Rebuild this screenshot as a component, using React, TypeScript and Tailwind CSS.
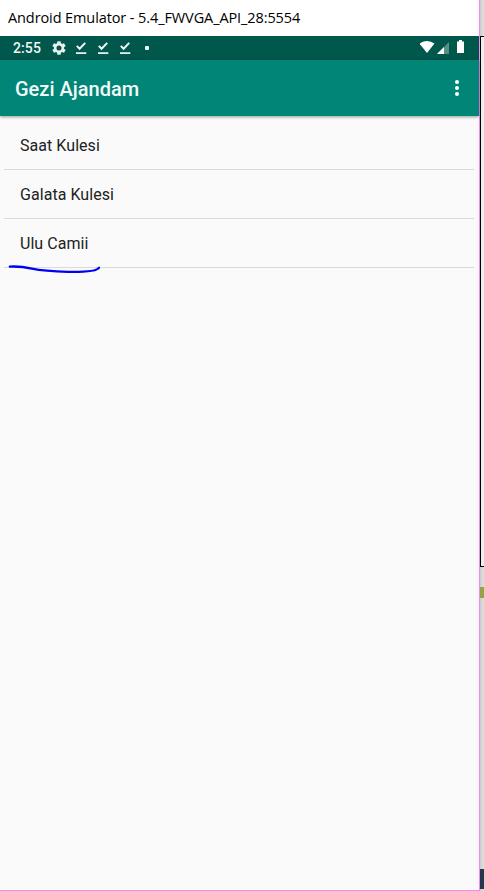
const places = ["Saat Kulesi", "Galata Kulesi", "Ulu Camii"];

function DownloadDone() {
  return (
    <svg className="h-[14px] w-3 shrink-0" viewBox="0 0 12 14" fill="none" stroke="#f1f7f6">
      <path d="M1.8 4.9 4.6 7.7 10.2 1.9" strokeWidth="2" />
      <path d="M1 12.1H11.3" strokeWidth="1.7" />
    </svg>
  );
}

function StatusBar() {
  return (
    <div className="flex h-6 items-center bg-[#00574b] pl-[13px] pr-[13px]">
      <span className="w-[39px] whitespace-nowrap text-[14px] font-medium leading-6 tracking-[0.1px] text-[#f1f7f6]">2:55</span>
      <svg className="h-[14px] w-[14px]" viewBox="2 2 20 20" fill="#e8f1ef">
        <path d="M19.14 12.94c.04-.3.06-.61.06-.94s-.02-.64-.07-.94l2.03-1.58a.49.49 0 0 0 .12-.61l-1.92-3.32a.49.49 0 0 0-.59-.22l-2.39.96a7 7 0 0 0-1.62-.94l-.36-2.54a.48.48 0 0 0-.48-.41h-3.84a.47.47 0 0 0-.47.41l-.36 2.54c-.59.24-1.13.57-1.62.94l-2.39-.96a.48.48 0 0 0-.59.22L2.74 8.87a.47.47 0 0 0 .12.61l2.03 1.58a7 7 0 0 0 0 1.88l-2.03 1.58a.49.49 0 0 0-.12.61l1.92 3.32c.12.22.37.29.59.22l2.39-.96c.5.38 1.03.7 1.62.94l.36 2.54c.05.24.24.41.48.41h3.84c.24 0 .44-.17.47-.41l.36-2.54a7 7 0 0 0 1.62-.94l2.39.96c.22.08.47 0 .59-.22l1.92-3.32a.47.47 0 0 0-.12-.61zM12 15.6A3.6 3.6 0 1 1 12 8.4a3.6 3.6 0 0 1 0 7.2" />
      </svg>
      <div className="ml-[9px] flex gap-[10px]">
        <DownloadDone />
        <DownloadDone />
        <DownloadDone />
      </div>
      <span className="ml-[14px] h-1 w-1 rounded-[1px] bg-[#f1f7f6]" />
      <div className="ml-auto flex items-center">
        <svg className="h-6 w-[46px]" viewBox="0 0 46 24">
          <path d="M-.5 7.6Q7 2.2 14.5 7.6L7 17Z" fill="#fff" />
          <path d="M29 6V18H17Z" fill="#578f87" />
          <path d="M24 11V18H17Z" fill="#fff" />
          <path d="M39 4H42V5.5H44V17H37V5.5H39Z" fill="#fff" />
        </svg>
      </div>
    </div>
  );
}

function Toolbar() {
  return (
    <header className="relative flex h-14 items-center justify-between bg-[#008577] pl-[15px] pr-5 shadow-[0_1px_3px_rgba(0,0,0,0.4)]">
      <h1 className="pt-[2px] text-[20px] font-medium leading-6 text-[#f4faf9]">Gezi Ajandam</h1>
      <div className="flex flex-col gap-[2px]">
        <span className="h-1 w-1 rounded-full bg-white" />
        <span className="h-1 w-1 rounded-full bg-white" />
        <span className="h-1 w-1 rounded-full bg-white" />
      </div>
    </header>
  );
}

function DesktopEdge() {
  return (
    <aside className="flex h-full w-1 flex-col bg-gradient-to-r from-[#cbcbcb] to-[#e2e2e2]">
      <div className="h-9" />
      <div className="h-[531px] border-y border-l border-black bg-[#eeeeee]" />
      <div className="mt-5 h-[11px] bg-[#91a544]" />
      <div className="mt-auto mb-[2px] h-5 bg-[#27364b]" />
    </aside>
  );
}

export default function App() {
  return (
    <div className="relative flex h-[891px] w-[484px] overflow-hidden bg-white font-[Roboto,sans-serif]">
      <main className="flex h-full w-[480px] flex-col border-b border-r border-[#f48af0] bg-[#fafafa]">
        <div className="flex h-9 items-center bg-white pl-2 font-['Open_Sans','Noto_Sans',sans-serif] text-[14.5px] text-black">
          <span className="whitespace-nowrap tracking-[-0.1px]">Android Emulator - 5.4_FWVGA_API_28:5554</span>
        </div>
        <StatusBar />
        <Toolbar />
        <ul className="pl-1 pr-[5px] pt-[5px]">
          {places.map((place) => (
            <li key={place} className="h-[49px] border-b border-[#dadada] pl-4 text-[16px] leading-[49px] tracking-[0.05px] text-[#212121]">
              {place}
            </li>
          ))}
        </ul>
      </main>
      <DesktopEdge />
      <svg className="absolute left-2 top-[262px] h-3 w-24" viewBox="0 0 96 12" fill="none">
        <path d="M1.8 4.6C12 4 17 5.1 24 6.7C34 8.9 44 9.5 60 9.8C74 10 89 9.6 91 5.7" stroke="#0000f5" strokeWidth="2.3" strokeLinecap="round" />
      </svg>
    </div>
  );
}
